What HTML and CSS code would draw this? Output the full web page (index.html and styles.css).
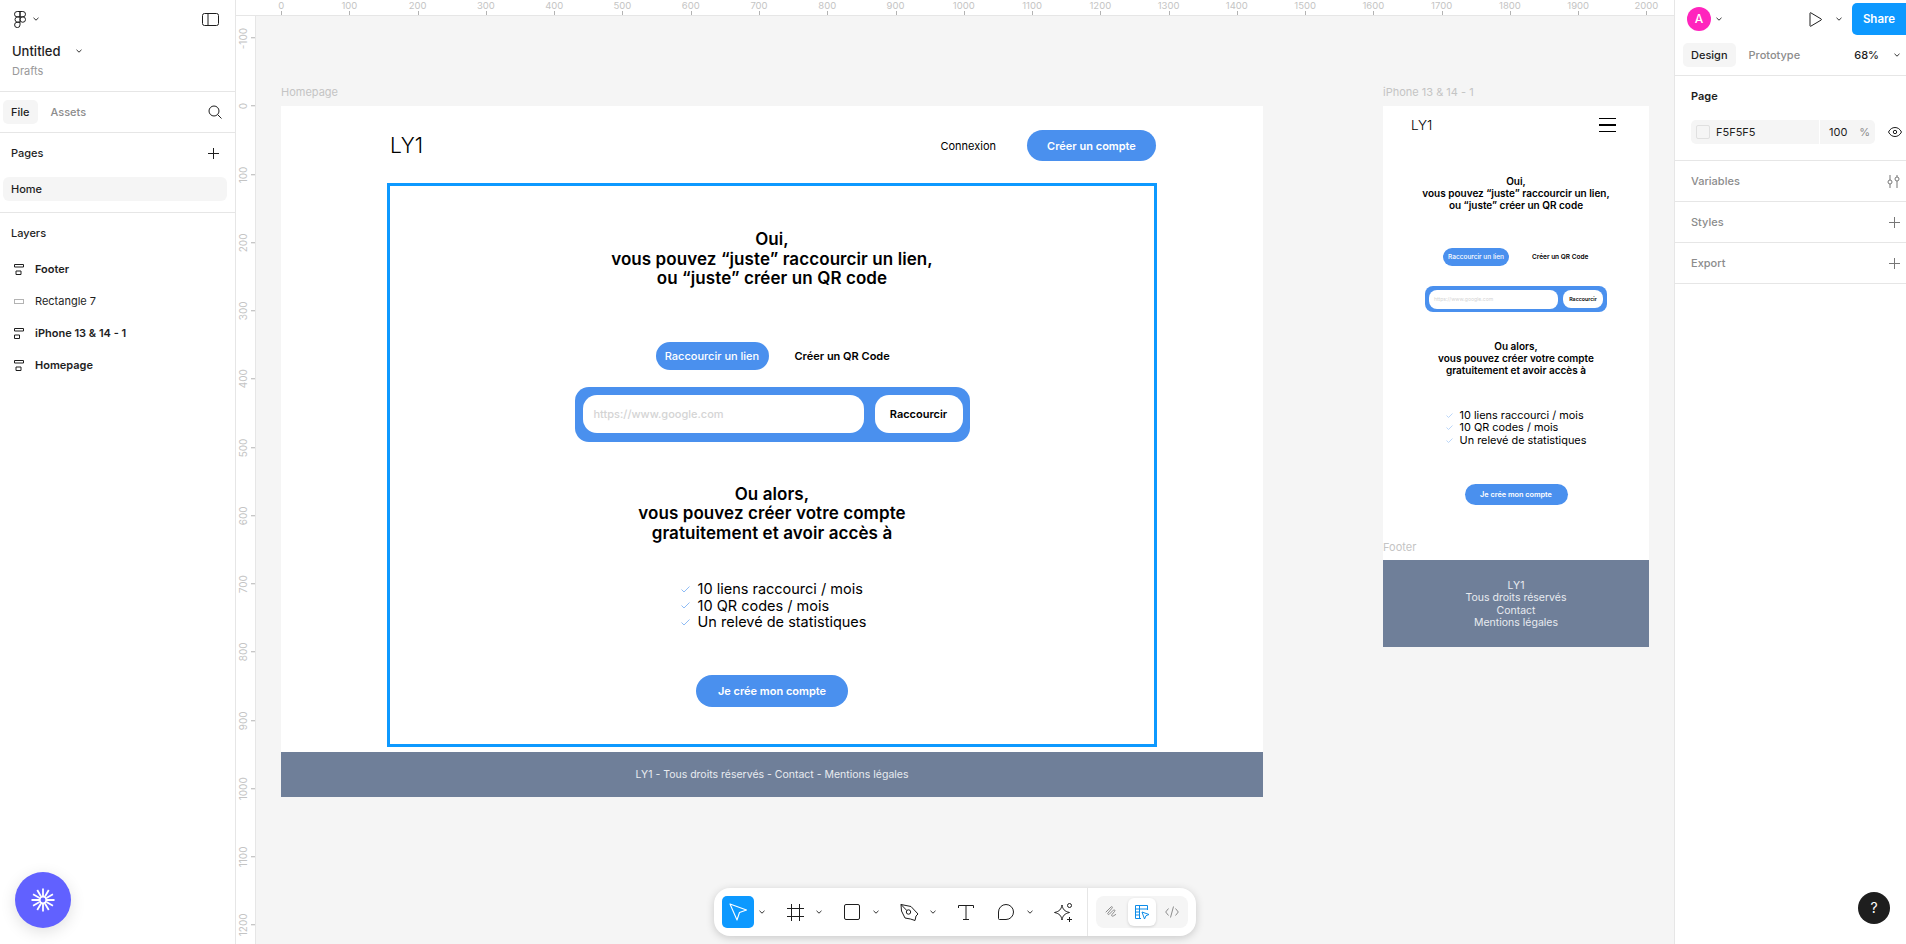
FILE: index.html
```html
<!DOCTYPE html>
<html lang="fr">
<head>
  <meta charset="UTF-8">
  <title>Untitled - Figma</title>
  <link rel="stylesheet" href="styles.css">
</head>
<body>
  <aside class="left-panel">
    <div class="file-head">
      <div class="logo-row">
        <svg class="logo" width="12" height="17" viewBox="0 0 12 17" fill="none" stroke="#1e1e1e"><path d="M6 .5H3.200a2.700 2.700 0 0 0 0 5.400H6zM6 .5h2.800a2.700 2.700 0 0 1 0 5.400H6zM6 5.900H3.200a2.700 2.700 0 0 0 0 5.300H6zM11.500 8.500a2.700 2.700 0 1 1-5.500 0 2.700 2.700 0 0 1 5.500 0zM6 11.200H3.200A2.700 2.700 0 1 0 6 13.900z"/></svg>
        <svg class="chev" width="6" height="4" viewBox="0 0 6 4"><path d="M.5.8 3 3.200 5.500.8" fill="none" stroke="#333"/></svg>
        <svg class="panel-toggle" width="17" height="13" viewBox="0 0 17 13" fill="none" stroke="#1e1e1e"><rect x=".5" y=".5" width="16" height="12" rx="2"/><path d="M6 .5v12"/></svg>
      </div>
      <div class="file-name">Untitled <svg class="chev" width="6" height="4" viewBox="0 0 6 4"><path d="M.5.8 3 3.200 5.500.8" fill="none" stroke="#333"/></svg></div>
      <div class="file-loc">Drafts</div>
    </div>
    <div class="tabs-row">
      <span class="tab tab-on">File</span>
      <span class="tab">Assets</span>
      <svg class="search" width="14" height="14" viewBox="0 0 14 14" fill="none" stroke="#1e1e1e"><circle cx="6" cy="6" r="5"/><path d="m9.700 9.700 3.800 3.800"/></svg>
    </div>
    <div class="pages">
      <div class="section-head"><span>Pages</span><svg width="11" height="11" viewBox="0 0 11 11" stroke="#1e1e1e"><path d="M5.500 0v11M0 5.500h11"/></svg></div>
      <div class="page-row">Home</div>
    </div>
    <div class="layers">
      <div class="layers-title">Layers</div>
      <div class="layer strong"><svg width="10" height="11" viewBox="0 0 10 11" fill="none" stroke="#1e1e1e"><path d="M.5.5h9V3h-9zM2 7h5v3.500H2z"/></svg>Footer</div>
      <div class="layer"><svg width="10" height="5" viewBox="0 0 10 5" fill="none" stroke="#b3b3b3"><rect x=".5" y=".5" width="9" height="4"/></svg>Rectangle 7</div>
      <div class="layer strong"><svg width="10" height="11" viewBox="0 0 10 11" fill="none" stroke="#1e1e1e"><path d="M.5.5h9V3h-9zM.5 7h5v3.500h-5z"/></svg>iPhone 13 &amp; 14 - 1</div>
      <div class="layer strong"><svg width="10" height="11" viewBox="0 0 10 11" fill="none" stroke="#1e1e1e"><path d="M.5.5h9V3h-9zM2 7h5v3.500H2z"/></svg>Homepage</div>
    </div>
    <button class="help-bubble">
      <svg width="24" height="24" viewBox="0 0 24 24" fill="none" stroke="#fff" stroke-width="1.800"><circle cx="12" cy="12" r="3.300"/><path d="M12 .5V8M12 16v7.500M.5 12H8M16 12h7.500M6.250 2.040 10 8.540M14 15.460l3.750 6.500M2.040 6.250 8.540 10M15.460 14l6.500 3.750M2.040 17.750 8.540 14M15.460 10l6.500-3.750M6.250 21.960 10 15.460M14 8.540l3.750-6.500"/></svg>
    </button>
  </aside>

  <main class="workspace">
    <div class="ruler-top">
      <span>0</span><span>100</span><span>200</span><span>300</span><span>400</span><span>500</span><span>600</span><span>700</span><span>800</span><span>900</span><span>1000</span><span>1100</span><span>1200</span><span>1300</span><span>1400</span><span>1500</span><span>1600</span><span>1700</span><span>1800</span><span>1900</span><span>2000</span>
    </div>
    <div class="workspace-body">
      <div class="ruler-left">
        <span>-100</span><span>0</span><span>100</span><span>200</span><span>300</span><span>400</span><span>500</span><span>600</span><span>700</span><span>800</span><span>900</span><span>1000</span><span>1100</span><span>1200</span>
      </div>
      <div class="canvas">
        <div class="board board-home">
          <div class="board-label">Homepage</div>
          <div class="frame">
            <header class="site-head">
              <div class="brand">LY1</div>
              <nav class="site-nav">
                <span>Connexion</span>
                <span class="pill nav-pill">Créer un compte</span>
              </nav>
            </header>
            <section class="selected">
              <h2 class="title">Oui,<br>vous pouvez “juste” raccourcir un lien,<br>ou “juste” créer un QR code</h2>
              <div class="switcher">
                <span class="pill switch-pill">Raccourcir un lien</span>
                <span class="switch-alt">Créer un QR Code</span>
              </div>
              <div class="url-box">
                <div class="url-input">https://www.google.com</div>
                <div class="url-btn">Raccourcir</div>
              </div>
              <h2 class="title title-two">Ou alors,<br>vous pouvez créer votre compte<br>gratuitement et avoir accès à</h2>
              <ul class="perks">
                <li><svg width="9" height="7" viewBox="0 0 9 7"><path d="M.5 3.500 3 6 8.500.5" fill="none" stroke="#8fbcf5"/></svg>10 liens raccourci / mois</li>
                <li><svg width="9" height="7" viewBox="0 0 9 7"><path d="M.5 3.500 3 6 8.500.5" fill="none" stroke="#8fbcf5"/></svg>10 QR codes / mois</li>
                <li><svg width="9" height="7" viewBox="0 0 9 7"><path d="M.5 3.500 3 6 8.500.5" fill="none" stroke="#8fbcf5"/></svg>Un relevé de statistiques</li>
              </ul>
              <span class="pill cta">Je crée mon compte</span>
            </section>
            <footer class="site-foot">LY1 - Tous droits réservés - Contact - Mentions légales</footer>
          </div>
        </div>

        <div class="board board-phone">
          <div class="board-label">iPhone 13 &amp; 14 - 1</div>
          <div class="frame phone">
            <header class="phone-head">
              <div class="brand brand-sm">LY1</div>
              <div class="burger"><i></i><i></i><i></i></div>
            </header>
            <h2 class="title-sm">Oui,<br>vous pouvez “juste” raccourcir un lien,<br>ou “juste” créer un QR code</h2>
            <div class="switcher-sm">
              <span class="pill switch-pill-sm">Raccourcir un lien</span>
              <span class="switch-alt-sm">Créer un QR Code</span>
            </div>
            <div class="url-box-sm">
              <div class="url-input-sm">https://www.google.com</div>
              <div class="url-btn-sm">Raccourcir</div>
            </div>
            <h2 class="title-sm title-sm-two">Ou alors,<br>vous pouvez créer votre compte<br>gratuitement et avoir accès à</h2>
            <ul class="perks-sm">
              <li><svg width="7" height="5" viewBox="0 0 7 5"><path d="M.5 2.500l2 2 4-4" fill="none" stroke="#a9ccf7" stroke-width=".8"/></svg>10 liens raccourci / mois</li>
              <li><svg width="7" height="5" viewBox="0 0 7 5"><path d="M.5 2.500l2 2 4-4" fill="none" stroke="#a9ccf7" stroke-width=".8"/></svg>10 QR codes / mois</li>
              <li><svg width="7" height="5" viewBox="0 0 7 5"><path d="M.5 2.500l2 2 4-4" fill="none" stroke="#a9ccf7" stroke-width=".8"/></svg>Un relevé de statistiques</li>
            </ul>
            <span class="pill cta-sm">Je crée mon compte</span>
            <div class="board-label footer-label">Footer</div>
          </div>
          <footer class="phone-foot">LY1<br>Tous droits réservés<br>Contact<br>Mentions légales</footer>
        </div>

        <div class="toolbar">
          <div class="tool tool-on"><svg width="20" height="20" viewBox="0 0 20 20" fill="none" stroke="#fff" stroke-width="1.100" stroke-linejoin="round"><path d="M2 2l16.500 6-7 2.500L9 18z"/></svg></div>
          <svg class="tool-chev" width="6" height="4" viewBox="0 0 6 4"><path d="M.5.8 3 3.200 5.500.8" fill="none" stroke="#333"/></svg>
          <div class="tool"><svg width="17" height="17" viewBox="0 0 17 17" stroke="#1e1e1e"><path d="M4.500 0v17M12.500 0v17M0 4.500h17M0 12.500h17"/></svg></div>
          <svg class="tool-chev" width="6" height="4" viewBox="0 0 6 4"><path d="M.5.8 3 3.200 5.500.8" fill="none" stroke="#333"/></svg>
          <div class="tool"><svg width="16" height="16" viewBox="0 0 16 16" fill="none" stroke="#1e1e1e"><rect x=".5" y=".5" width="15" height="15" rx="1.500"/></svg></div>
          <svg class="tool-chev" width="6" height="4" viewBox="0 0 6 4"><path d="M.5.8 3 3.200 5.500.8" fill="none" stroke="#333"/></svg>
          <div class="tool"><svg width="19" height="19" viewBox="0 0 19 19" fill="none" stroke="#1e1e1e"><path d="M1 1.500 11 3.500 18 11l-2 2-1 4.500-4.500-1.500L5 15 1.500 8z"/><circle cx="8.500" cy="9" r="2.200"/><path d="M1 1.500 6.800 7.500"/></svg></div>
          <svg class="tool-chev" width="6" height="4" viewBox="0 0 6 4"><path d="M.5.8 3 3.200 5.500.8" fill="none" stroke="#333"/></svg>
          <div class="tool tool-text"><svg width="16" height="15" viewBox="0 0 16 15" fill="none" stroke="#1e1e1e"><path d="M.5 3V.5h15V3M8 .5v14M5 14.500h6"/></svg></div>
          <div class="tool"><svg width="16" height="16" viewBox="0 0 16 16" fill="none" stroke="#1e1e1e"><path d="M8 .5a7.500 7.500 0 0 1 0 15H1.500a1 1 0 0 1-1-1V8A7.500 7.500 0 0 1 8 .5z"/></svg></div>
          <svg class="tool-chev" width="6" height="4" viewBox="0 0 6 4"><path d="M.5.8 3 3.200 5.500.8" fill="none" stroke="#333"/></svg>
          <div class="tool"><svg width="19" height="19" viewBox="0 0 19 19" fill="none" stroke="#1e1e1e" stroke-linejoin="round"><path d="M8 2c.7 4.200 2.400 6.300 7.500 7.500C10.400 10.700 8.700 12.800 8 17c-.7-4.200-2.400-6.300-7.500-7.500C5.600 8.300 7.300 6.200 8 2z"/><circle cx="15.500" cy="2.500" r="2"/><path d="M15.500 14v5M13 16.500h5"/></svg></div>
          <div class="tool-sep"></div>
          <div class="mode-group">
            <div class="mode"><svg width="14" height="14" viewBox="0 0 14 14" fill="none" stroke="#8c8c8c" stroke-linecap="round"><path d="M1 7l5-5c1-1 2 .3 1 1.200L3 8c-1 1 .4 2 1.300 1.200l4-4c1-1 2.200.2 1.300 1.200L7 9.500c-1 1 0 2.200 1.200 1.500l2.500-1.500"/></svg></div>
            <div class="mode mode-on"><svg width="16" height="16" viewBox="0 0 16 16" fill="none" stroke="#0d8ce9"><path d="M7 14.500H1.500v-13h12V6M1.500 5h12M5.500 1.500v13M1.500 8h4M1.500 11h4"/><path d="M8 8l7 2.500-3 1.200-1.500 3.300z" stroke-linejoin="round"/></svg></div>
            <div class="mode"><svg width="14" height="12" viewBox="0 0 14 12" fill="none" stroke="#8c8c8c"><path d="M3.500 2.500.7 6l2.800 3.500M10.500 2.500 13.300 6l-2.800 3.500M8.500.5l-3 11"/></svg></div>
          </div>
        </div>
      </div>
    </div>
  </main>

  <aside class="right-panel">
    <div class="top-row">
      <span class="avatar">A</span>
      <svg class="chev avatar-chev" width="6" height="4" viewBox="0 0 6 4"><path d="M.5.8 3 3.200 5.500.8" fill="none" stroke="#333"/></svg>
      <svg class="play" width="13" height="15" viewBox="0 0 13 15" fill="none" stroke="#1e1e1e"><path d="M1 1.200v12.600a.5.5 0 0 0 .8.400L12.200 8a.6.6 0 0 0 0-1L1.800.8a.5.5 0 0 0-.8.400z"/></svg>
      <svg class="chev play-chev" width="6" height="4" viewBox="0 0 6 4"><path d="M.5.8 3 3.200 5.500.8" fill="none" stroke="#333"/></svg>
      <span class="share">Share</span>
    </div>
    <div class="mode-row">
      <span class="tab tab-on tab-design">Design</span>
      <span class="tab tab-proto">Prototype</span>
      <span class="zoom">68%</span>
      <svg class="chev" width="6" height="4" viewBox="0 0 6 4"><path d="M.5.8 3 3.200 5.500.8" fill="none" stroke="#333"/></svg>
    </div>
    <div class="page-props">
      <div class="prop-title">Page</div>
      <div class="fill-row">
        <div class="fill-field">
          <span class="swatch"></span>
          <span class="hex">F5F5F5</span>
          <span class="opacity">100</span>
          <span class="percent">%</span>
        </div>
        <svg width="14" height="10" viewBox="0 0 14 10" fill="none" stroke="#1e1e1e"><path d="M.5 5C2 2 4.300.5 7 .5S12 2 13.500 5C12 8 9.700 9.500 7 9.500S2 8 .5 5z"/><circle cx="7" cy="5" r="1.700"/></svg>
      </div>
    </div>
    <div class="prop-row"><span>Variables</span><svg width="13" height="13" viewBox="0 0 13 13" fill="none" stroke="#777"><path d="M3 0v5M3 9v4M10 0v2M10 6v7"/><circle cx="3" cy="7" r="2"/><circle cx="10" cy="4" r="2"/></svg></div>
    <div class="prop-row"><span>Styles</span><svg width="11" height="11" viewBox="0 0 11 11" stroke="#777"><path d="M5.500 0v11M0 5.500h11"/></svg></div>
    <div class="prop-row"><span>Export</span><svg width="11" height="11" viewBox="0 0 11 11" stroke="#777"><path d="M5.500 0v11M0 5.500h11"/></svg></div>
    <div class="help">?</div>
  </aside>
</body>
</html>
```

FILE: styles.css
```css
* {
  box-sizing: border-box;
}
html, body {
  height: 100%;
}
body {
  margin: 0;
  display: flex;
  height: 944px;
  overflow: hidden;
  font-family: Inter, "Liberation Sans", sans-serif;
  font-size: 11px;
  color: #1e1e1e;
  background: #fff;
}
svg {
  display: block;
  flex: none;
}

/* left panel */
.left-panel {
  position: relative;
  width: 236px;
  flex: none;
  border-right: 1px solid #e6e6e6;
  background: #fff;
}
.file-head {
  height: 92px;
  padding: 11px 16px 0 12px;
  border-bottom: 1px solid #e6e6e6;
}
.logo-row {
  display: flex;
  align-items: center;
  gap: 7px;
  height: 16px;
  padding-left: 2px;
}
.panel-toggle {
  margin-left: auto;
}
.file-name {
  display: flex;
  align-items: center;
  gap: 15px;
  margin-top: 15px;
  font-size: 13px;
  font-weight: 500;
  line-height: 18px;
}
.file-loc {
  margin-top: 4px;
  font-size: 11px;
  line-height: 14px;
  color: #999;
}
.tabs-row {
  display: flex;
  align-items: center;
  height: 41px;
  padding: 0 13px 0 3px;
  border-bottom: 1px solid #e6e6e6;
}
.tab {
  height: 24px;
  padding: 0 8px;
  margin-right: 5px;
  border-radius: 5px;
  font-weight: 500;
  line-height: 24px;
  color: #8c8c8c;
}
.tab-on {
  background: #f5f5f5;
  color: #1e1e1e;
}
.search {
  margin-left: auto;
}
.pages {
  height: 80px;
  padding: 0 8px 0 3px;
  border-bottom: 1px solid #e6e6e6;
}
.section-head {
  display: flex;
  align-items: center;
  justify-content: space-between;
  height: 40px;
  margin-bottom: 4px;
  padding: 0 8px;
  font-weight: 500;
}
.page-row {
  height: 24px;
  padding-left: 8px;
  border-radius: 6px;
  background: #f5f5f5;
  font-weight: 500;
  line-height: 24px;
}
.layers-title {
  height: 40px;
  padding-left: 11px;
  font-weight: 500;
  line-height: 41px;
}
.layer {
  display: flex;
  align-items: center;
  gap: 11px;
  height: 32px;
  padding-left: 14px;
}
.layer.strong {
  font-weight: 600;
}
.help-bubble {
  position: absolute;
  left: 15px;
  top: 872px;
  display: flex;
  align-items: center;
  justify-content: center;
  width: 56px;
  height: 56px;
  padding: 0;
  border: 0;
  border-radius: 50%;
  background: #6161ff;
  box-shadow: 0 4px 16px rgba(0, 0, 0, 0.12);
}

/* rulers and canvas */
.workspace {
  flex: 1;
  min-width: 0;
  display: flex;
  flex-direction: column;
  background: #f5f5f5;
}
.ruler-top {
  display: flex;
  height: 16px;
  padding-left: 11px;
  flex: none;
  overflow: hidden;
  background: #fff;
  border-bottom: 1px solid #e6e6e6;
}
.ruler-top span {
  position: relative;
  flex: 0 0 68.28px;
  font-size: 9.5px;
  line-height: 11.5px;
  text-align: center;
  color: #c4c4c4;
}
.ruler-top span::after {
  content: "";
  position: absolute;
  left: 50%;
  top: 11px;
  width: 1px;
  height: 4px;
  background: #b3b3b3;
}
.workspace-body {
  flex: 1;
  display: flex;
  min-height: 0;
}
.ruler-left {
  width: 20px;
  flex: none;
  overflow: hidden;
  background: #fff;
  border-right: 1px solid #e6e6e6;
  display: flex;
  flex-direction: column;
}
.ruler-left span {
  position: relative;
  flex: 0 0 68.28px;
  display: flex;
  align-items: center;
  justify-content: center;
  padding-left: 6px;
  writing-mode: vertical-rl;
  transform: rotate(180deg);
  font-size: 10px;
  color: #c4c4c4;
}
.ruler-left span:first-child {
  margin-top: -12px;
}
.ruler-left span::after {
  content: "";
  position: absolute;
  left: 0;
  top: 50%;
  width: 4px;
  height: 1px;
  background: #b3b3b3;
}
.canvas {
  position: relative;
  flex: 1;
  overflow: hidden;
}
.board {
  position: absolute;
}
.board-home {
  left: 25px;
  top: 69px;
  width: 982px;
}
.board-phone {
  left: 1127px;
  top: 69px;
  width: 266px;
}
.board-label {
  height: 14px;
  margin-bottom: 7px;
  font-size: 11px;
  line-height: 14px;
  color: #c4c4c4;
}
.frame {
  display: flex;
  flex-direction: column;
  background: #fff;
  color: #000;
}
.pill {
  display: flex;
  align-items: center;
  justify-content: center;
  border-radius: 999px;
  background: #4a90ee;
  color: #fff;
  white-space: nowrap;
}

/* desktop board */
.site-head {
  display: flex;
  justify-content: space-between;
  height: 77px;
  padding: 24px 107px 0 109px;
}
.brand {
  font-size: 21px;
  font-weight: 300;
  line-height: 31px;
}
.site-nav {
  display: flex;
  align-items: center;
  height: 31px;
  gap: 31px;
  font-size: 11px;
}
.nav-pill {
  width: 129px;
  height: 31px;
  font-weight: 600;
}
.selected {
  display: flex;
  flex-direction: column;
  align-items: center;
  height: 564px;
  margin: 0 106px;
  padding-top: 44px;
  border: 3px solid #0d99ff;
}
.title {
  margin: 0;
  font-size: 17px;
  font-weight: 600;
  line-height: 19.5px;
  text-align: center;
  letter-spacing: .005em;
}
.title-two {
  margin-top: 43px;
}
.switcher {
  display: flex;
  align-items: center;
  gap: 26px;
  margin-top: 53px;
}
.switch-pill {
  width: 113px;
  height: 28px;
  font-weight: 500;
}
.switch-alt {
  width: 94px;
  font-weight: 600;
  white-space: nowrap;
}
.url-box {
  display: flex;
  align-items: center;
  width: 395px;
  height: 55px;
  margin-top: 17px;
  padding: 0 7px 0 8px;
  border-radius: 14px;
  background: #4a90ee;
}
.url-input {
  width: 281px;
  height: 38px;
  padding-left: 11px;
  border-radius: 14px;
  background: #fff;
  font-weight: 500;
  line-height: 38px;
  color: #d4d4d4;
}
.url-btn {
  width: 88px;
  height: 38px;
  margin-left: 11px;
  border-radius: 14px;
  background: #fff;
  font-weight: 600;
  line-height: 38px;
  text-align: center;
}
.perks {
  display: flex;
  flex-direction: column;
  margin: 38px 0 0 3px;
  padding: 0;
  list-style: none;
  font-size: 14.5px;
  line-height: 16.5px;
}
.perks li {
  display: flex;
  align-items: center;
  gap: 8px;
  white-space: nowrap;
}
.cta {
  width: 152px;
  height: 32px;
  margin-top: 44px;
  font-weight: 600;
}
.site-foot {
  height: 45px;
  margin-top: 5px;
  background: #6f7f99;
  font-size: 10.5px;
  line-height: 45px;
  text-align: center;
  color: #e8ebf0;
}

/* phone board */
.phone {
  align-items: center;
  height: 454px;
}
.phone-head {
  display: flex;
  align-items: center;
  justify-content: space-between;
  align-self: stretch;
  height: 38px;
  padding: 0 33px 0 28px;
}
.brand-sm {
  font-size: 13.5px;
  line-height: 20px;
}
.burger {
  display: flex;
  flex-direction: column;
  gap: 5px;
  width: 17px;
}
.burger i {
  height: 1.5px;
  background: #000;
}
.title-sm {
  margin: 31px 0 0;
  font-size: 10px;
  font-weight: 600;
  line-height: 12px;
  text-align: center;
}
.title-sm-two {
  margin-top: 28px;
}
.switcher-sm {
  display: flex;
  align-items: center;
  gap: 23px;
  margin-top: 37px;
  font-size: 6.5px;
}
.switch-pill-sm {
  width: 66px;
  height: 18px;
  font-weight: 500;
}
.switch-alt-sm {
  width: 57px;
  font-weight: 600;
  white-space: nowrap;
}
.url-box-sm {
  display: flex;
  align-items: center;
  width: 182px;
  height: 26px;
  margin-top: 20px;
  padding: 0 4px;
  border-radius: 8px;
  background: #4a90ee;
}
.url-input-sm {
  width: 129px;
  height: 19px;
  padding-left: 5px;
  border-radius: 8px;
  background: #fff;
  font-size: 5.1px;
  line-height: 19px;
  color: #d4d4d4;
}
.url-btn-sm {
  width: 40px;
  height: 18px;
  margin-left: 5px;
  border-radius: 8px;
  background: #fff;
  font-size: 5.3px;
  font-weight: 600;
  line-height: 18px;
  text-align: center;
}
.perks-sm {
  margin: 33px 0 0;
  padding: 0;
  list-style: none;
  font-size: 10.9px;
  line-height: 12.4px;
}
.perks-sm li {
  display: flex;
  align-items: center;
  gap: 7px;
  white-space: nowrap;
}
.cta-sm {
  width: 103px;
  height: 21px;
  margin-top: 38px;
  font-size: 7.3px;
  font-weight: 600;
}
.footer-label {
  align-self: flex-start;
  margin: auto 0 6px;
}
.phone-foot {
  height: 87px;
  padding-top: 20px;
  background: #6f7f99;
  font-size: 10.5px;
  line-height: 12.4px;
  text-align: center;
  color: #e8ebf0;
}

/* bottom toolbar */
.toolbar {
  position: absolute;
  left: 458px;
  bottom: 8px;
  display: flex;
  align-items: center;
  width: 482px;
  height: 48px;
  padding: 0 8px;
  border-radius: 16px;
  background: #fff;
  box-shadow: 0 2px 8px rgba(0, 0, 0, 0.18);
}
.tool {
  display: flex;
  flex: none;
  align-items: center;
  justify-content: center;
  width: 32px;
  height: 32px;
}
.tool-on {
  border-radius: 5px;
  background: #0d99ff;
}
.tool-chev {
  margin: 0 14px 0 5px;
}
.tool-text {
  margin-right: 8px;
}
.tool-sep {
  flex: none;
  width: 1px;
  height: 48px;
  margin-left: 8px;
  background: #e6e6e6;
}
.mode-group {
  display: flex;
  flex: none;
  align-items: center;
  justify-content: space-between;
  width: 92px;
  height: 32px;
  margin-left: 8px;
  padding: 0 2px;
  border-radius: 8px;
  background: #f5f5f5;
}
.mode {
  display: flex;
  align-items: center;
  justify-content: center;
  width: 28px;
  height: 28px;
}
.mode-on {
  border-radius: 6px;
  background: #fff;
  box-shadow: 0 1px 3px rgba(0, 0, 0, 0.15);
}

/* right panel */
.right-panel {
  position: relative;
  width: 232px;
  flex: none;
  border-left: 1px solid #e6e6e6;
  background: #fff;
}
.top-row {
  display: flex;
  align-items: center;
  height: 38px;
  padding-left: 12px;
}
.avatar {
  width: 24px;
  height: 24px;
  border-radius: 50%;
  background: #ff24bd;
  color: #fff;
  font-size: 12px;
  font-weight: 500;
  line-height: 24px;
  text-align: center;
}
.avatar-chev {
  margin-left: 5px;
}
.play {
  margin-left: 87px;
}
.play-chev {
  margin-left: 14px;
}
.share {
  width: 54px;
  height: 32px;
  margin-left: 10px;
  border-radius: 5px 0 0 5px;
  background: #0d99ff;
  color: #fff;
  font-size: 11.5px;
  font-weight: 600;
  line-height: 32px;
  text-align: center;
}
.mode-row {
  display: flex;
  align-items: center;
  height: 38px;
  padding: 5px 0 8px 8px;
  border-bottom: 1px solid #e6e6e6;
}
.tab-proto {
  margin-right: 0;
}
.zoom {
  margin: 0 15px 0 auto;
  font-weight: 500;
}
.mode-row .chev {
  margin-right: 6px;
}
.page-props {
  height: 85px;
  padding: 11px 0 0 16px;
  border-bottom: 1px solid #e6e6e6;
}
.prop-title {
  font-weight: 600;
  line-height: 18px;
}
.fill-row {
  display: flex;
  align-items: center;
  gap: 13px;
  margin-top: 15px;
}
.fill-field {
  display: flex;
  align-items: center;
  width: 184px;
  height: 24px;
  padding-left: 5px;
  border-radius: 5px;
  background: #f5f5f5;
}
.swatch {
  width: 14px;
  height: 14px;
  border: 1px solid #e0e0e0;
  border-radius: 2px;
  background: #f5f5f5;
}
.hex {
  width: 104px;
  margin-left: 6px;
  border-right: 1px solid #fff;
  line-height: 24px;
}
.opacity {
  margin-left: 9px;
}
.percent {
  margin-left: 12px;
  color: #8c8c8c;
}
.prop-row {
  display: flex;
  align-items: center;
  justify-content: space-between;
  height: 41px;
  padding: 0 6px 0 16px;
  border-bottom: 1px solid #e6e6e6;
  font-weight: 500;
  color: #8c8c8c;
}
.help {
  position: absolute;
  right: 16px;
  bottom: 20px;
  width: 32px;
  height: 32px;
  border-radius: 50%;
  background: #1e1e1e;
  color: #fff;
  font-size: 14px;
  line-height: 32px;
  text-align: center;
}
```
